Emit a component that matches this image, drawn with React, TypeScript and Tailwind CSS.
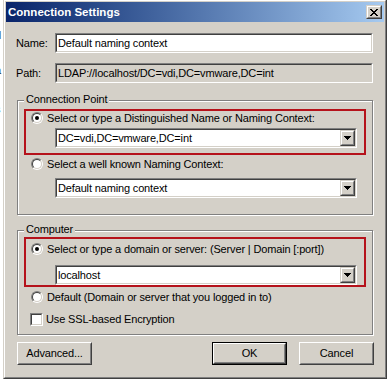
import React from "react";

const sunkenOuter =
  "border border-t-[#808080] border-l-[#808080] border-b-white border-r-white";
const sunkenInner =
  "border border-t-[#404040] border-l-[#404040] border-b-[#d4d0c8] border-r-[#d4d0c8]";
const frameOuter =
  "border border-t-[#d4d0c8] border-l-[#d4d0c8] border-b-[#404040] border-r-[#404040]";
const frameInner =
  "border border-t-white border-l-white border-b-[#808080] border-r-[#808080]";
const btnOuter =
  "border border-t-white border-l-white border-b-[#404040] border-r-[#404040]";
const btnInner =
  "border border-t-[#d4d0c8] border-l-[#d4d0c8] border-b-[#808080] border-r-[#808080]";

function Radio({ checked }: { checked?: boolean }) {
  return (
    <span
      className={`block w-[12px] h-[12px] shrink-0 rounded-full ${sunkenOuter}`}
    >
      <span
        className={`flex w-full h-full items-center justify-center rounded-full bg-white ${sunkenInner}`}
      >
        {checked && <span className="block w-[4px] h-[4px] rounded-full bg-black" />}
      </span>
    </span>
  );
}

function Arrow() {
  return (
    <svg width="7" height="4" viewBox="0 0 7 4" shapeRendering="crispEdges">
      <path d="M0 0h7v1H0z M1 1h5v1H1z M2 2h3v1H2z M3 3h1v1H3z" fill="#000" />
    </svg>
  );
}

function Combo({ value }: { value: string }) {
  return (
    <div className={`flex w-[302px] h-[20px] ${sunkenOuter}`}>
      <div className={`flex flex-1 bg-white ${sunkenInner}`}>
        <div className="flex flex-1 items-center pl-[1px] whitespace-nowrap">
          {value}
        </div>
        <div className={`w-[15px] h-full ${frameOuter}`}>
          <div
            className={`flex w-full h-full items-center justify-center bg-[#d4d0c8] ${frameInner}`}
          >
            <Arrow />
          </div>
        </div>
      </div>
    </div>
  );
}

function Field({ value, readOnly }: { value: string; readOnly?: boolean }) {
  return (
    <div className={`w-[318px] h-[20px] ${sunkenOuter}`}>
      <div
        className={`flex w-full h-full items-center pl-[1px] whitespace-nowrap ${sunkenInner} ${
          readOnly ? "bg-[#d4d0c8]" : "bg-white"
        }`}
      >
        {value}
      </div>
    </div>
  );
}

function Button({
  label,
  isDefault,
}: {
  label: string;
  isDefault?: boolean;
}) {
  const inner = (
    <div className={`w-full h-full ${btnOuter}`}>
      <div
        className={`flex w-full h-full items-center justify-center bg-[#d4d0c8] ${btnInner}`}
      >
        {label}
      </div>
    </div>
  );
  return (
    <div
      className={`w-[75px] h-[23px] ${
        isDefault ? "border border-black" : ""
      }`}
    >
      {inner}
    </div>
  );
}

function CloseGlyph() {
  return (
    <svg width="8" height="7" viewBox="0 0 8 7" shapeRendering="crispEdges">
      <path
        d="M0 0h2v1H0z M6 0h2v1H6z M1 1h2v1H1z M5 1h2v1H5z M2 2h4v1H2z M3 3h2v1H3z M2 4h4v1H2z M1 5h2v1H1z M5 5h2v1H5z M0 6h2v1H0z M6 6h2v1H6z"
        fill="#000"
      />
    </svg>
  );
}

export default function App() {
  return (
    <div className="relative w-[389px] h-[382px] overflow-hidden bg-white font-['Liberation_Sans',Arial,sans-serif] text-[11px] tracking-[-0.15px] leading-[13px] text-black">
      {/* fragments of the window behind the dialog */}
      <span className="absolute left-[-5px] top-[29px] text-[11px] leading-[13px] text-[#222]">d</span>
      <span className="absolute left-[-5px] top-[64px] text-[11px] leading-[13px] text-[#222]">a</span>
      <span className="absolute left-[-5px] top-[103px] text-[11px] leading-[13px] text-[#2050c0]">s</span>

      <div className={`relative ml-[3px] mt-[-1px] w-[384px] h-[380px] ${frameOuter}`}>
        <div
          className={`flex flex-col w-full h-full bg-[#d4d0c8] p-px ${frameInner}`}
        >
          {/* title bar */}
          <div className="flex h-[20px] shrink-0 items-center bg-linear-to-r from-[#0a246a] to-[#a6caf0] pl-[2px] pr-[2px]">
            <span className="flex-1 text-[11.5px] tracking-normal font-bold text-white whitespace-nowrap">
              Connection Settings
            </span>
            <div className={`w-[16px] h-[14px] ${frameOuter}`}>
              <div
                className={`flex w-full h-full items-center justify-center bg-[#d4d0c8] ${frameInner}`}
              >
                <CloseGlyph />
              </div>
            </div>
          </div>

          {/* body */}
          <div className="flex flex-col">
            <div className="mt-[11px] flex h-[20px] items-center pl-[10px]">
              <span className="w-[39px]">Name:</span>
              <Field value="Default naming context" />
            </div>
            <div className="mt-[10px] flex h-[20px] items-center pl-[10px]">
              <span className="w-[39px]">Path:</span>
              <Field value="LDAP://localhost/DC=vdi,DC=vmware,DC=int" readOnly />
            </div>

            {/* Connection Point group */}
            <div className="relative mt-[17px] ml-[11px] w-[356px] h-[115px] border border-[#808080] shadow-[inset_1px_1px_0_#fff,1px_1px_0_#fff]">
              <span className="absolute left-[6px] top-[-8px] bg-[#d4d0c8] px-[2px] whitespace-nowrap">
                Connection Point
              </span>
              <div className="mt-[8px] ml-[6px] w-[342px] h-[46px] border-2 border-[#b5121b]">
                <div className="flex h-[14px] items-center gap-[4px] pl-[5px] whitespace-nowrap">
                  <Radio checked />
                  <span>Select or type a Distinguished Name or Naming Context:</span>
                </div>
                <div className="mt-[3px] ml-[29px]">
                  <Combo value="DC=vdi,DC=vmware,DC=int" />
                </div>
              </div>
              <div className="mt-[2px] flex h-[14px] items-center gap-[4px] pl-[13px] whitespace-nowrap">
                <Radio />
                <span>Select a well known Naming Context:</span>
              </div>
              <div className="mt-[7px] ml-[37px]">
                <Combo value="Default naming context" />
              </div>
            </div>

            {/* Computer group */}
            <div className="relative mt-[15px] ml-[11px] w-[356px] h-[105px] border border-[#808080] shadow-[inset_1px_1px_0_#fff,1px_1px_0_#fff]">
              <span className="absolute left-[6px] top-[-8px] bg-[#d4d0c8] px-[2px] whitespace-nowrap">
                Computer
              </span>
              <div className="mt-[6px] ml-[6px] w-[342px] h-[50px] border-2 border-[#b5121b]">
                <div className="mt-[3px] flex h-[14px] items-center gap-[4px] pl-[5px] whitespace-nowrap">
                  <Radio checked />
                  <span>Select or type a domain or server: (Server | Domain [:port])</span>
                </div>
                <div className="mt-[9px] ml-[29px]">
                  <Combo value="localhost" />
                </div>
              </div>
              <div className="mt-[3px] flex h-[14px] items-center gap-[4px] pl-[13px] whitespace-nowrap">
                <Radio />
                <span>Default (Domain or server that you logged in to)</span>
              </div>
              <div className="mt-[8px] flex h-[14px] items-center gap-[3px] pl-[12px] whitespace-nowrap">
                <span className={`block w-[13px] h-[13px] ${sunkenOuter}`}>
                  <span className={`block w-full h-full bg-white ${sunkenInner}`} />
                </span>
                <span>Use SSL-based Encryption</span>
              </div>
            </div>

            {/* buttons */}
            <div className="mt-[7px] flex pl-[11px] pr-[10px]">
              <Button label="Advanced..." />
              <div className="ml-auto flex gap-[12px]">
                <Button label="OK" isDefault />
                <Button label="Cancel" />
              </div>
            </div>
          </div>
        </div>
      </div>
    </div>
  );
}
